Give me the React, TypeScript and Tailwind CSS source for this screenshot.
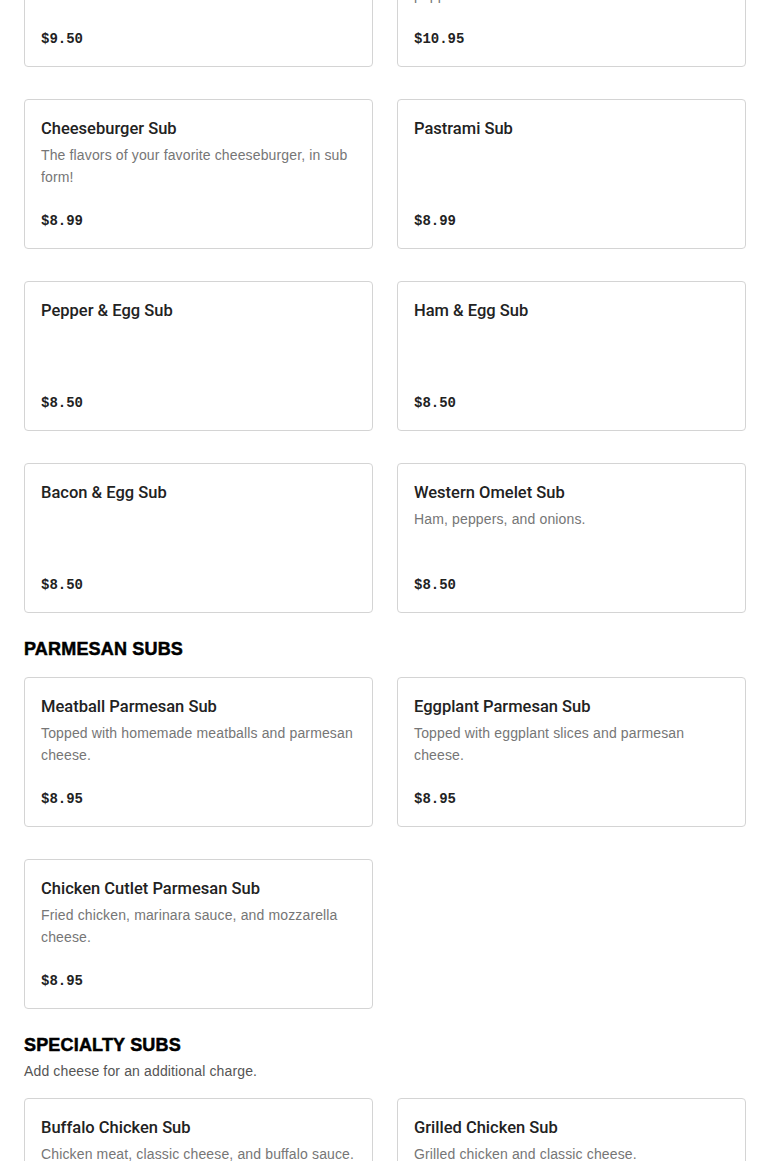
import React from "react"

type Item = { name: string; desc?: string; price: string }

const TOP: Item[] = [
  { name: "Steak & Cheese Sub", desc: "Shaved steak with grilled onions and melted cheese.", price: "$9.50" },
  { name: "Italian Combo Sub", desc: "Ham, salami, capicola, provolone, and sliced pepperoni.", price: "$10.95" },
  { name: "Cheeseburger Sub", desc: "The flavors of your favorite cheeseburger, in sub form!", price: "$8.99" },
  { name: "Pastrami Sub", price: "$8.99" },
  { name: "Pepper & Egg Sub", price: "$8.50" },
  { name: "Ham & Egg Sub", price: "$8.50" },
  { name: "Bacon & Egg Sub", price: "$8.50" },
  { name: "Western Omelet Sub", desc: "Ham, peppers, and onions.", price: "$8.50" },
]

const PARM: Item[] = [
  { name: "Meatball Parmesan Sub", desc: "Topped with homemade meatballs and parmesan cheese.", price: "$8.95" },
  { name: "Eggplant Parmesan Sub", desc: "Topped with eggplant slices and parmesan cheese.", price: "$8.95" },
  { name: "Chicken Cutlet Parmesan Sub", desc: "Fried chicken, marinara sauce, and mozzarella cheese.", price: "$8.95" },
]

const SPECIALTY: Item[] = [
  { name: "Buffalo Chicken Sub", desc: "Chicken meat, classic cheese, and buffalo sauce.", price: "$9.25" },
  { name: "Grilled Chicken Sub", desc: "Grilled chicken and classic cheese.", price: "$9.25" },
]

function Card({ item }: { item: Item }) {
  return (
    <div className="flex h-[150px] flex-col rounded-[4px] border border-[#d4d4d4] bg-white p-4">
      <h3 className="pt-px font-['Roboto',sans-serif] text-[16.5px] font-medium leading-6 text-[#222222]">
        {item.name}
      </h3>
      {item.desc && (
        <p className="mt-[3px] text-[14px] leading-[22px] tracking-[0.01em] text-[#767676]">{item.desc}</p>
      )}
      <p className="mt-auto font-['Liberation_Mono',monospace] text-[14px] font-bold leading-[22px] text-[#222222]">
        {item.price}
      </p>
    </div>
  )
}

function Grid({ items }: { items: Item[] }) {
  return (
    <div className="grid grid-cols-2 gap-x-6 gap-y-8">
      {items.map((it) => (
        <Card key={it.name} item={it} />
      ))}
    </div>
  )
}

export default function App() {
  return (
    <div className="h-[1161px] overflow-hidden bg-white font-['Liberation_Sans',Arial,sans-serif]">
      <div className="-mt-[83px] px-6">
        <Grid items={TOP} />

        <h2 className="mt-6 mb-4 text-[18px] font-black leading-6 tracking-[0.01em] text-black [-webkit-text-stroke:0.5px_black]">
          PARMESAN SUBS
        </h2>
        <Grid items={PARM} />

        <h2 className="mt-6 text-[18px] font-black leading-6 tracking-[0.01em] text-black [-webkit-text-stroke:0.5px_black]">
          SPECIALTY SUBS
        </h2>
        <p className="mt-[3px] mb-4 text-[14px] leading-[22px] tracking-[0.01em] text-[#555555]">
          Add cheese for an additional charge.
        </p>
        <Grid items={SPECIALTY} />
      </div>
    </div>
  )
}
